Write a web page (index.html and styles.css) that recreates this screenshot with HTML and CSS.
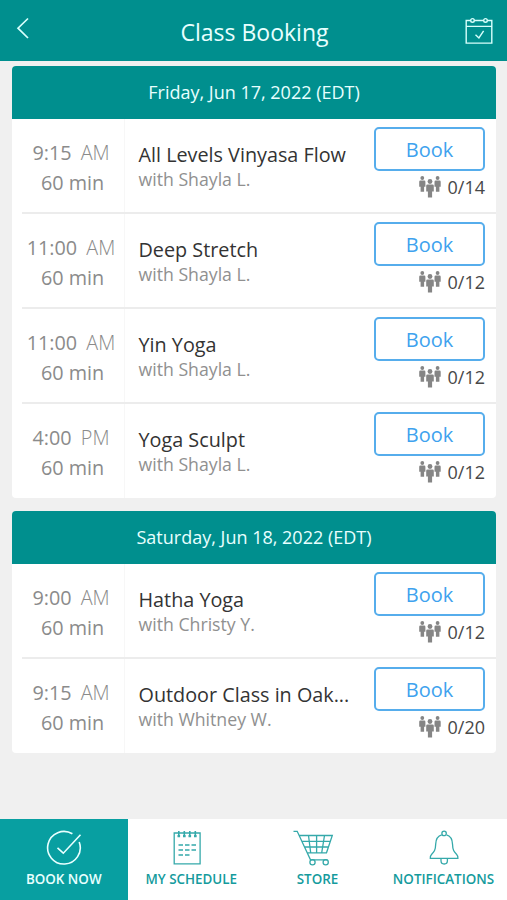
FILE: index.html
```html
<!DOCTYPE html>
<html lang="en">
<head>
<meta charset="utf-8">
<title>Class Booking</title>
<link rel="stylesheet" href="styles.css">
</head>
<body>
<svg width="0" height="0" class="defs" aria-hidden="true">
  <symbol id="people" viewBox="0 0 22 22">
    <g id="person"><circle cx="3.3" cy="2" r="1.9"/><path d="M.2 5.7Q.2 4.6 1.4 4.6h3.8q1.2 0 1.2 1.1v5.1H5.1v5H1.6v-5H.2z"/></g>
    <use href="#person" x="15.3"/>
    <circle cx="11" cy="5.5" r="2.4"/><path d="M7.2 9.8q0-1.3 1.3-1.3h5q1.3 0 1.3 1.3v5.7h-1.7v6H8.9v-6H7.2z"/>
  </symbol>
</svg>
<header class="topbar">
  <svg class="back" viewBox="0 0 14 22"><path d="M12 1.5 2 11.2 12 21"/></svg>
  <h1>Class Booking</h1>
  <svg class="calendar" viewBox="0 0 28 28"><path d="M5.5 3.5H1.2v22.6h25.6V3.5h-4.3M9.5 3.5h9M1.2 9.4h25.6M10.5 17.8l3.4 3.2 4.7-7.2"/><circle cx="7.5" cy="3.4" r="1.8"/><circle cx="20.5" cy="3.4" r="1.8"/></svg>
</header>
<main>
  <section class="day">
    <h2>Friday, Jun 17, 2022 (EDT)</h2>
    <article><div class="when"><p>9:15 <span>AM</span></p><p>60 min</p></div><div class="info"><h3>All Levels Vinyasa Flow</h3><p>with Shayla L.</p></div><div class="action"><button>Book</button><p><svg><use href="#people"/></svg>0/14</p></div></article>
    <article><div class="when"><p>11:00 <span>AM</span></p><p>60 min</p></div><div class="info"><h3>Deep Stretch</h3><p>with Shayla L.</p></div><div class="action"><button>Book</button><p><svg><use href="#people"/></svg>0/12</p></div></article>
    <article><div class="when"><p>11:00 <span>AM</span></p><p>60 min</p></div><div class="info"><h3>Yin Yoga</h3><p>with Shayla L.</p></div><div class="action"><button>Book</button><p><svg><use href="#people"/></svg>0/12</p></div></article>
    <article><div class="when"><p>4:00 <span>PM</span></p><p>60 min</p></div><div class="info"><h3>Yoga Sculpt</h3><p>with Shayla L.</p></div><div class="action"><button>Book</button><p><svg><use href="#people"/></svg>0/12</p></div></article>
  </section>
  <section class="day">
    <h2>Saturday, Jun 18, 2022 (EDT)</h2>
    <article><div class="when"><p>9:00 <span>AM</span></p><p>60 min</p></div><div class="info"><h3>Hatha Yoga</h3><p>with Christy Y.</p></div><div class="action"><button>Book</button><p><svg><use href="#people"/></svg>0/12</p></div></article>
    <article><div class="when"><p>9:15 <span>AM</span></p><p>60 min</p></div><div class="info"><h3>Outdoor Class in Oak...</h3><p>with Whitney W.</p></div><div class="action"><button>Book</button><p><svg><use href="#people"/></svg>0/20</p></div></article>
  </section>
</main>
<nav class="tabs">
  <a class="active"><svg viewBox="0 0 36 36"><path class="bold" d="M26.4 3.8A16.3 16.3 0 1 0 33.2 12M11.5 17.8l5.8 5.4L34.5 4.8"/></svg>BOOK NOW</a>
  <a><svg class="notes" viewBox="0 0 36 36"><path d="M5.2 3h25.9v30.8H5.2z"/><path class="bold" d="M9.8 1v6M15.3 1v6M20.8 1v6M26.3 1v6M9.5 15h4.5M16 15h4.5M22.5 15H27M9.5 20h4.5M16 20h4.5M22.5 20H27M9.5 25h4.5M16 25h4.5"/><path d="M9.8 5v2.3M15.3 5v2.3M20.8 5v2.3M26.3 5v2.3" stroke-width="2.6"/></svg>MY SCHEDULE</a>
  <a><svg class="cart" viewBox="0 0 42 36"><path d="M1.5 1.3h3.7L18.5 29.8h17M7.5 5.5h32.8l-5.8 17.3H15.2M10.2 11.3h28.2M12.8 17h23.6M16.5 5.5l2.2 17.3M24.6 5.5v17.3M32.5 5.5l-2.8 17.3"/><circle cx="20.5" cy="32.3" r="2.6"/><circle cx="33.7" cy="32.3" r="2.6"/></svg>STORE</a>
  <a><svg viewBox="0 0 36 36"><path d="M15.8 4.8C11.3 6 9.9 9 9.7 14c-.2 6.3-1.5 7.7-4 10.2-1.2 1.2-1.5 2.5-1.4 4.1h27.6c.1-1.6-.2-2.9-1.4-4.1-2.5-2.5-3.8-3.9-4-10.2-.2-5-1.6-8-6.1-9.2"/><circle cx="18.1" cy="3.4" r="2.2"/><path d="M15 28.5v2.3a3.2 3.2 0 0 0 6.4 0v-2.3"/></svg>NOTIFICATIONS</a>
</nav>
</body>
</html>
```
FILE: styles.css
```css
* { box-sizing: border-box; margin: 0; padding: 0; }
body { height: 900px; display: flex; flex-direction: column; background: #f0f0f0; font-family: "Open Sans", "Noto Sans", sans-serif; overflow: hidden; }
.defs { display: none; }
.topbar { height: 61.3px; flex: none; background: #008f8e; color: #e8ffff; display: flex; align-items: center; justify-content: space-between; padding: 0 14px 0 16px; }
.topbar svg { fill: none; stroke: #d8fffc; stroke-width: 1.4; }
.topbar .back { width: 14px; height: 22px; margin: 0 14px 5px 0; stroke-width: 1.7; }
.topbar h1 { font-size: 23px; font-weight: 400; line-height: 32px; padding-top: 2px; }
.topbar .calendar { width: 28px; height: 28px; }
main { flex: 1; padding: 4.7px 11px 0 12px; }
.day { margin-bottom: 12.5px; background: #fff; border-radius: 4px; overflow: hidden; }
.day h2 { height: 53.5px; background: #008f8e; color: #e8ffff; font-size: 18px; font-weight: 400; line-height: 53.5px; text-align: center; }
article { height: 95px; display: flex; position: relative; }
h2 + article { height: 94px; }
h2 + article > .info, h2 + article > .action { margin-top: -1px; }
h2 + article > .when p:first-child { margin-top: 19px; }
article + article::before { content: ""; position: absolute; left: 10px; right: 0; top: -1px; height: 1.5px; background: #ececec; }
.when { width: 113px; border-right: 1px solid #f7f7f7; color: #8b8b8b; font-size: 19.8px; line-height: 30px; text-align: center; flex: none; padding-left: 9px; }
.when p:first-child { margin-top: 20px; white-space: nowrap; margin-left: -3px; }
.when span { font-weight: 300; margin-left: 4px; }
.info { flex: 1; padding-left: 13.5px; white-space: nowrap; }
.info h3 { margin-top: 23.3px; font-size: 19.8px; line-height: 26px; font-weight: 400; color: #333; }
.info p { font-size: 17.7px; line-height: 24px; margin-top: -0.5px; color: #909090; }
.action { width: 110px; margin-right: 11px; flex: none; }
.action button { display: block; width: 111px; height: 43.5px; margin-top: 9px; margin-left: -1px; border: 2px solid #56adec; border-radius: 5px; background: #fff; color: #3ea2ee; font: 20px "Open Sans", sans-serif; line-height: 39px; }
.action p { display: flex; justify-content: flex-end; align-items: center; font-size: 18px; line-height: 24px; margin-top: 4.5px; color: #484848; }
.action svg { width: 22px; height: 22px; fill: #858585; margin-right: 7px; }
.tabs { height: 81.5px; flex: none; display: grid; grid-template-columns: 127.5px 127.5px 125px 127px; background: #fff; }
.tabs a { display: flex; flex-direction: column; align-items: center; padding-top: 11px; color: #159b9d; font-size: 13.4px; font-weight: 600; line-height: 18px; white-space: nowrap; }
.tabs svg { width: 36px; height: 36px; margin-bottom: 4px; fill: none; stroke: #35a9aa; stroke-width: 1.3; }
.tabs .notes { margin-right: 8px; }
.tabs .cart { width: 42px; margin-right: 10px; }
.tabs .bold { stroke-width: 1.6; }
.tabs .active { background: #089fa1; color: #e9ffff; }
.tabs .active svg { stroke: #e9ffff; }
```
